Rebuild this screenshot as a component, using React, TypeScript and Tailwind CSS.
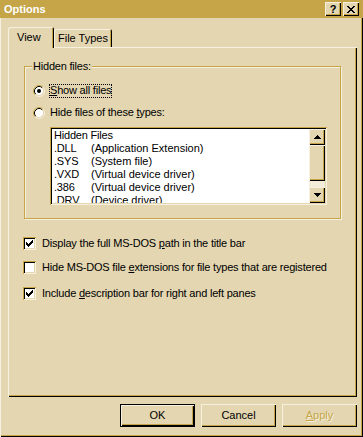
import React from "react";

const rows: [string, string][] = [
  [".DLL", "(Application Extension)"],
  [".SYS", "(System file)"],
  [".VXD", "(Virtual device driver)"],
  [".386", "(Virtual device driver)"],
  [".DRV", "(Device driver)"],
];

function Radio({ checked }: { checked?: boolean }) {
  return (
    <svg width="12" height="12" viewBox="0 0 12 12" className="shrink-0">
      <circle cx="6" cy="6" r="4.5" fill="#fff" />
      <path d="M2.11 9.89 A5.5 5.5 0 0 1 9.89 2.11" stroke="#C5A548" fill="none" />
      <path d="M9.89 2.11 A5.5 5.5 0 0 1 2.11 9.89" stroke="#F6F0DF" fill="none" />
      <path d="M2.82 9.18 A4.5 4.5 0 0 1 9.18 2.82" stroke="#000" fill="none" />
      <path d="M9.18 2.82 A4.5 4.5 0 0 1 2.82 9.18" stroke="#E3D6B0" fill="none" />
      {checked && <circle cx="6" cy="6" r="2" fill="#000" />}
    </svg>
  );
}

function Check({ checked }: { checked?: boolean }) {
  return (
    <div className="w-[13px] h-[13px] bg-white shrink-0 shadow-[inset_1px_1px_0_#C5A548,inset_-1px_-1px_0_#F6F0DF,inset_2px_2px_0_#000,inset_-2px_-2px_0_#E3D6B0]">
      {checked && (
        <svg width="13" height="13" viewBox="0 0 13 13" shapeRendering="crispEdges">
          <path d="M3 5h1v3h-1zM4 6h1v3h-1zM5 7h1v3h-1zM6 6h1v3h-1zM7 5h1v3h-1zM8 4h1v3h-1zM9 3h1v3h-1z" fill="#000" />
        </svg>
      )}
    </div>
  );
}

function Arrow({ down }: { down?: boolean }) {
  return (
    <svg width="7" height="4" viewBox="0 0 7 4" shapeRendering="crispEdges">
      <path d={down ? "M0 0h7v1h-7zM1 1h5v1h-5zM2 2h3v1h-3zM3 3h1v1h-1z" : "M3 0h1v1h-1zM2 1h3v1h-3zM1 2h5v1h-5zM0 3h7v1h-7z"} fill="#000" />
    </svg>
  );
}

const raised =
  "bg-[#E3D6B0] shadow-[inset_1px_1px_0_#F6F0DF,inset_-1px_-1px_0_#000,inset_-2px_-2px_0_#C5A548]";

export default function App() {
  return (
    <div
      className="w-[363px] h-[437px] bg-[#E3D6B0] text-[11px] leading-[13px] tracking-[-0.2px] text-black flex flex-col shadow-[inset_1px_0_0_#F6F0DF,inset_-1px_-1px_0_#000,inset_-2px_-2px_0_#C5A548]"
      style={{ fontFamily: '"Liberation Sans", Arial, sans-serif' }}
    >
      {/* title bar */}
      <div className="h-[18px] bg-[#C5A548] flex items-center pl-[4px] pr-[4px]">
        <span className="font-bold text-white flex-1 tracking-normal">Options</span>
        <div className="flex gap-[2px]">
          <div className={`w-[16px] h-[14px] ${raised} flex items-center justify-center font-bold text-[11px] leading-none`}>?</div>
          <div className={`w-[16px] h-[14px] ${raised} flex items-center justify-center`}>
            <svg width="8" height="7" viewBox="0 0 8 7" shapeRendering="crispEdges">
              <path d="M0 0h2v1h-2zM6 0h2v1h-2zM1 1h2v1h-2zM5 1h2v1h-2zM2 2h4v1h-4zM3 3h2v1h-2zM2 4h4v1h-4zM1 5h2v1h-2zM5 5h2v1h-2zM0 6h2v1h-2zM6 6h2v1h-2z" fill="#000" />
            </svg>
          </div>
        </div>
      </div>

      <div className="pl-[8px] pt-[9px]">
        {/* tabs */}
        <div className="flex items-end h-[20px] tracking-normal">
          <div className="relative z-10 -mb-px w-[46px] h-[21px] bg-[#E3D6B0] rounded-t-[2px] pl-[9px] pt-[4px] shadow-[inset_1px_1px_0_#F6F0DF,inset_-1px_0_0_#000,inset_-2px_0_0_#C5A548]">
            View
          </div>
          <div className="w-[58px] h-[18px] rounded-t-[2px] pl-[4px] pt-[3px] shadow-[inset_1px_1px_0_#F6F0DF,inset_-1px_0_0_#000,inset_-2px_0_0_#C5A548]">
            File Types
          </div>
        </div>

        {/* panel */}
        <div className="w-[349px] h-[350px] pl-[15px] pt-[19px] shadow-[inset_1px_1px_0_#F6F0DF,inset_-1px_-1px_0_#000,inset_-2px_-2px_0_#C5A548]">
          <div className="relative ml-[1px] w-[317px] h-[153px] border border-[#C5A548] shadow-[1px_1px_0_#F6F0DF,inset_1px_1px_0_#F6F0DF] pt-[17px] pl-[8px]">
            <span className="absolute left-[7px] -top-[7px] px-[1px] bg-[#E3D6B0]">Hidden files:</span>

            <div className="flex items-center h-[13px]">
              <Radio checked />
              <span className="ml-[4px] px-[1px] h-[14px] outline-1 outline-dotted outline-black -outline-offset-1 flex items-center">
                <span><u>S</u>how all files</span>
              </span>
            </div>
            <div className="flex items-center h-[13px] mt-[9px]">
              <Radio />
              <span className="ml-[5px]">Hide files of these <u>t</u>ypes:</span>
            </div>

            <div className="mt-[8px] ml-[17px] w-[277px] h-[78px] bg-white p-[2px] flex shadow-[inset_1px_1px_0_#C5A548,inset_-1px_-1px_0_#F6F0DF,inset_2px_2px_0_#000,inset_-2px_-2px_0_#E3D6B0]">
              <div className="flex-1 overflow-hidden pl-[2px] whitespace-nowrap">
                <div>Hidden Files</div>
                {rows.map(([ext, desc]) => (
                  <div key={ext} className="flex">
                    <span className="w-[37px]">{ext}</span>
                    <span className="tracking-normal">{desc}</span>
                  </div>
                ))}
              </div>
              <div className="w-[16px] flex flex-col">
                <div className={`h-[16px] ${raised} flex items-center justify-center`}>
                  <Arrow />
                </div>
                <div className={`h-[36px] ${raised}`} />
                <div className="flex-1 bg-[#F3ECD9]" />
                <div className={`h-[16px] ${raised} flex items-center justify-center`}>
                  <Arrow down />
                </div>
              </div>
            </div>
          </div>

          <div className="mt-[18px] flex items-center h-[13px]">
            <Check checked />
            <span className="ml-[6px]">Display the full MS-DOS <u>p</u>ath in the title bar</span>
          </div>
          <div className="mt-[11px] flex items-center h-[13px]">
            <Check />
            <span className="ml-[6px]">Hide MS-DOS file <u>e</u>xtensions for file types that are registered</span>
          </div>
          <div className="mt-[13px] flex items-center h-[13px]">
            <Check checked />
            <span className="ml-[6px]">Include <u>d</u>escription bar for right and left panes</span>
          </div>
        </div>

        {/* buttons */}
        <div className="w-[349px] mt-[7px] flex justify-end gap-[6px] tracking-normal">
          <div className="w-[75px] h-[23px] border border-black flex items-center justify-center shadow-[inset_1px_1px_0_#F6F0DF,inset_-1px_-1px_0_#000,inset_-2px_-2px_0_#C5A548]">
            OK
          </div>
          <div className={`w-[75px] h-[23px] ${raised} flex items-center justify-center`}>Cancel</div>
          <div className={`w-[75px] h-[23px] ${raised} flex items-center justify-center text-[#C5A548] [text-shadow:1px_1px_0_#F6F0DF]`}>
            <span><u>A</u>pply</span>
          </div>
        </div>
      </div>
    </div>
  );
}
